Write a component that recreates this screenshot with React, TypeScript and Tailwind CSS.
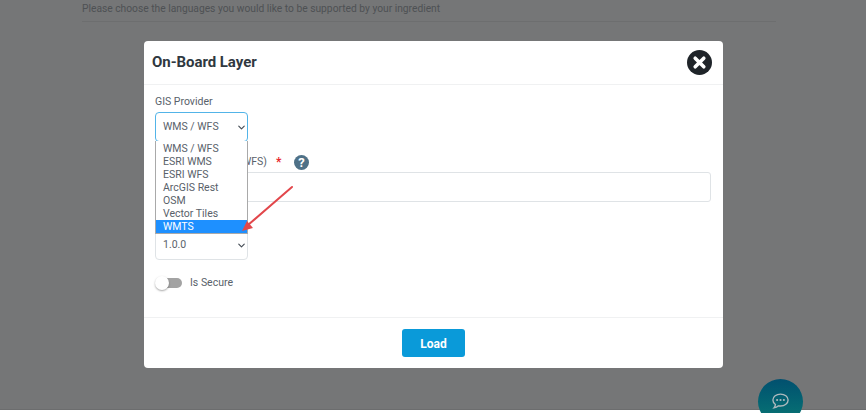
import { ChevronDown } from "lucide-react"

const options = ["WMS / WFS", "ESRI WMS", "ESRI WFS", "ArcGIS Rest", "OSM", "Vector Tiles", "WMTS"]

function SelectBox({ value, active }: { value: string; active?: boolean }) {
  return (
    <div
      className={`flex h-[30px] w-[93px] items-center justify-between rounded-[4px] border pl-[7px] text-[10.5px] text-[#59616a] ${
        active ? "border-[#52b4e8]" : "border-[#dfe3e6]"
      }`}
    >
      <span>{value}</span>
      <ChevronDown size={11} strokeWidth={2.5} className="text-[#444c55]" />
    </div>
  )
}

export default function App() {
  return (
    <div className="relative h-[413px] w-[868px] overflow-hidden bg-white font-['Roboto',sans-serif]">
      {/* page behind the overlay */}
      <div className="h-[410px] w-[866px] overflow-hidden border-b border-[#6c6d6e] bg-[#757677]">
        <div className="ml-[82px] mr-[90px] border-b border-[#6d6e6f] pb-[6px] pt-[3px] text-[10.25px] leading-[12px] text-[#4e5154]">
          Please choose the languages you would like to be supported by your ingredient
        </div>
      </div>

      {/* chat bubble */}
      <div className="absolute left-[758px] top-[379px] flex h-[45px] w-[45px] items-start justify-center rounded-full bg-gradient-to-b from-[#02506f] to-[#0b7774] pt-[13px]">
        <svg width="19" height="19" viewBox="0 0 18 18" fill="none">
          <path
            d="M9 2C5 2 1.8 4.4 1.8 7.6c0 1.7.9 3.2 2.4 4.2-.1 1.2-.7 2.4-1.4 3.2 1.7-.2 3.2-.9 4.3-1.9.6.1 1.2.2 1.9.2 4 0 7.2-2.5 7.2-5.7S13 2 9 2z"
            stroke="#aeb9bd"
            strokeWidth="1.3"
          />
          <circle cx="5.8" cy="7.6" r="1" fill="#aeb9bd" />
          <circle cx="9" cy="7.6" r="1" fill="#aeb9bd" />
          <circle cx="12.2" cy="7.6" r="1" fill="#aeb9bd" />
        </svg>
      </div>

      {/* modal */}
      <div className="absolute left-[144px] top-[41px] flex h-[327px] w-[579px] flex-col rounded-[4px] bg-white">
        <div className="flex h-[44px] shrink-0 items-center justify-between border-b border-[#f0f1f2] pl-[8px] pr-[11px]">
          <h2 className="text-[15px] font-bold tracking-[-0.05px] text-[#2f3840]">On-Board Layer</h2>
          <svg width="25" height="25" viewBox="0 0 25 25">
            <circle cx="12.5" cy="12.5" r="12.5" fill="#1f2429" />
            <path d="M8.2 8.2l8.6 8.6M16.8 8.2l-8.6 8.6" stroke="#fff" strokeWidth="3.6" strokeLinecap="round" />
          </svg>
        </div>

        <div className="relative flex-1 px-[11px]">
          <label className="mt-[10px] block text-[10.5px] leading-[13px] text-[#59616a]">GIS Provider</label>
          <div className="mt-[4px]">
            <SelectBox value="WMS / WFS" active />
          </div>

          <div className="mt-[10px] flex h-[20px] items-center text-[10.5px] text-[#59616a]">
            <span className="ml-[87px]">WFS)</span>
            <span className="ml-[9px] text-[12px] font-bold leading-none text-[#e8262a]">*</span>
            <svg width="15" height="15" viewBox="0 0 15 15" className="ml-[13px]">
              <circle cx="7.5" cy="7.5" r="7.5" fill="#4f7187" />
              <text x="7.5" y="12" textAnchor="middle" fontSize="13" fontWeight="700" fill="#fff" fontFamily="Roboto">
                ?
              </text>
            </svg>
          </div>
          <div className="h-[30px] w-[556px] rounded-[3px] border border-[#dfe3e6]" />

          <div className="mt-[28px]">
            <SelectBox value="1.0.0" />
          </div>

          <div className="mt-[15px] flex items-center">
            <div className="relative ml-[1px] h-[10px] w-[26px] rounded-full bg-[#a3a3a3]">
              <div className="absolute left-[-1px] top-[-2px] h-[14px] w-[14px] rounded-full bg-white shadow-[0_1px_2px_rgba(0,0,0,0.35)]" />
            </div>
            <span className="ml-[8px] text-[10.5px] text-[#59616a]">Is Secure</span>
          </div>

          {/* open dropdown over the form */}
          <ul className="absolute left-[11px] top-[56px] h-[93px] w-[93px] border border-t-0 border-[#a9a9a9] bg-white pt-[1px] text-[10.5px] leading-[13px] text-[#59616a]">
            {options.map((o) => (
              <li key={o} className={`px-[7px] ${o === "WMTS" ? "bg-[#1e90ff] text-white" : ""}`}>
                {o}
              </li>
            ))}
          </ul>

          {/* red annotation arrow */}
          <svg className="absolute left-[90px] top-[99px]" width="70" height="60" viewBox="0 0 70 60">
            <path d="M58 3L14 41" stroke="#e2474b" strokeWidth="2" strokeLinecap="round" />
            <path d="M8 47l5-10 6 7z" fill="#e2474b" />
          </svg>
        </div>

        <div className="flex h-[51px] shrink-0 items-start justify-center border-t border-[#f0f1f2] pt-[11px]">
          <button className="h-[28px] w-[63px] rounded-[3px] bg-[#0a9ad9] pt-[1px] text-[12px] font-bold text-white">Load</button>
        </div>
      </div>
    </div>
  )
}
